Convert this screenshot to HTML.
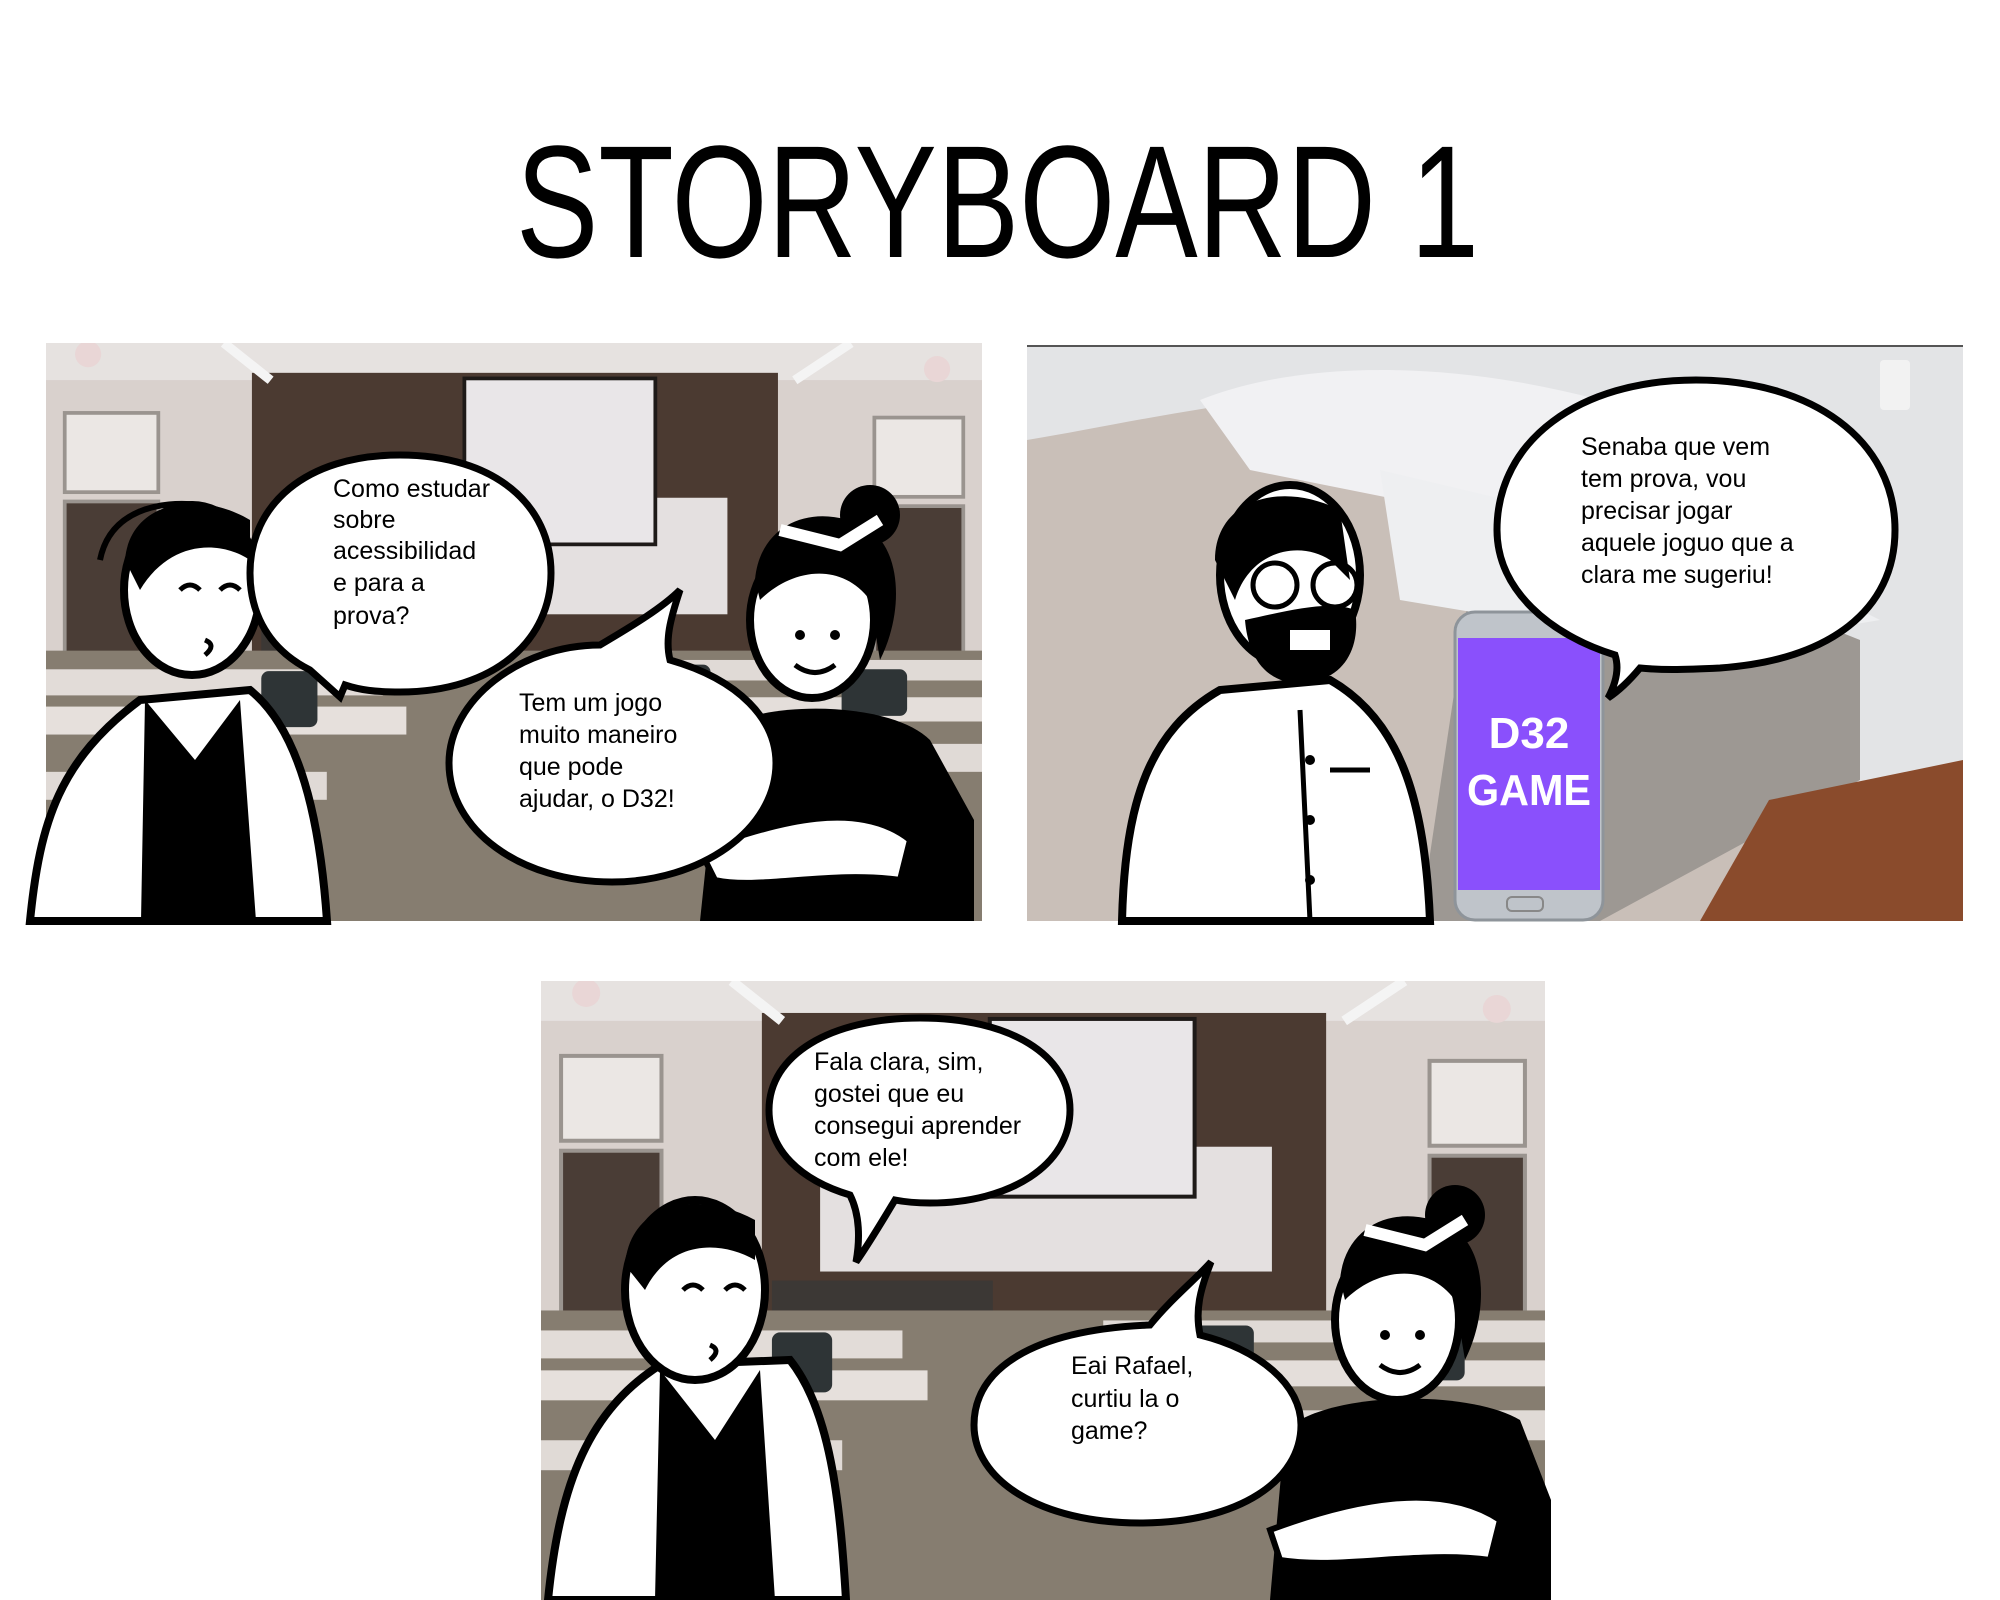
<!DOCTYPE html>
<html><head><meta charset="utf-8"><style>
html,body{margin:0;padding:0;background:#fff;width:2000px;height:1600px;overflow:hidden}
svg{display:block}
.t{font-family:"Liberation Sans","DejaVu Sans",sans-serif;font-size:25px;fill:#000}
</style></head><body>
<svg width="2000" height="1600" viewBox="0 0 2000 1600" xmlns="http://www.w3.org/2000/svg">
<defs>
<symbol id="room" viewBox="0 0 1000 620" preserveAspectRatio="none">
<rect width="1000" height="620" fill="#cfc6c2"/>
<rect width="1000" height="40" fill="#e6e2e0"/>
<rect x="0" y="40" width="220" height="380" fill="#d9d1cd"/>
<rect x="782" y="40" width="218" height="380" fill="#d9d1cd"/>
<rect x="20" y="75" width="100" height="85" fill="#ebe7e4" stroke="#9a948f" stroke-width="4"/>
<rect x="20" y="170" width="100" height="230" fill="#4a3d36" stroke="#9a948f" stroke-width="4"/>
<rect x="885" y="80" width="95" height="85" fill="#ebe7e4" stroke="#9a948f" stroke-width="4"/>
<rect x="885" y="175" width="95" height="225" fill="#4a3d36" stroke="#9a948f" stroke-width="4"/>
<rect x="220" y="32" width="562" height="300" fill="#4b3a31"/>
<rect x="278" y="166" width="450" height="125" fill="#e4e0e0"/>
<rect x="447" y="38" width="204" height="178" fill="#e9e6e8" stroke="#1e1a18" stroke-width="4"/>
<rect x="230" y="300" width="220" height="80" fill="#3c3835"/>
<rect x="0" y="330" width="1000" height="290" fill="#867d70"/>
<rect x="0" y="350" width="360" height="28" fill="#e2dcd8"/>
<rect x="0" y="390" width="385" height="30" fill="#e6e0dc"/>
<rect x="0" y="460" width="300" height="30" fill="#e0dad6"/>
<rect x="560" y="340" width="440" height="22" fill="#e0dad6"/>
<rect x="620" y="380" width="380" height="26" fill="#e4deda"/>
<rect x="700" y="430" width="300" height="30" fill="#e0dad6"/>
<rect x="230" y="352" width="60" height="60" rx="8" fill="#2e3436"/>
<rect x="650" y="345" width="60" height="45" rx="8" fill="#2e3436"/>
<rect x="850" y="350" width="70" height="50" rx="8" fill="#2e3436"/>
<circle cx="45" cy="12" r="14" fill="#e9d6d6"/>
<circle cx="952" cy="28" r="14" fill="#e9d6d6"/>
<path d="M190 0 L240 40 M800 40 L860 0" stroke="#f4f4f4" stroke-width="10"/>
</symbol>
</defs>

<text x="516" y="257" font-family="Liberation Sans, sans-serif" font-size="160" textLength="963" lengthAdjust="spacingAndGlyphs" fill="#000">STORYBOARD 1</text>

<!-- Panel 1 -->
<use href="#room" x="46" y="343" width="936" height="578"/>
<!-- man 1 -->
<path d="M30 921 C40 820 60 760 140 700 L250 690 C300 730 320 820 327 921 Z" fill="#fff" stroke="#000" stroke-width="8"/>
<path d="M145 700 L195 760 L240 700 L256 921 L141 921 Z" fill="#000"/>
<ellipse cx="192" cy="590" rx="68" ry="85" fill="#fff" stroke="#000" stroke-width="8"/>
<path d="M125 560 C130 500 200 490 250 520 L250 560 C220 540 170 540 140 590 Z" fill="#000"/>
<path d="M100 560 C110 510 160 500 200 505" stroke="#000" stroke-width="6" fill="none"/>
<path d="M180 590 q10 -10 20 0 M220 590 q10 -10 20 0 M205 640 q12 5 0 15" stroke="#000" stroke-width="5" fill="none"/>
<!-- woman 1 -->
<path d="M700 921 L720 730 C760 700 890 700 930 740 L974 820 L974 921 Z" fill="#000"/>
<path d="M700 850 C780 820 860 800 910 840 L900 880 C830 870 760 890 715 880 Z" fill="#fff" stroke="#000" stroke-width="6"/>
<ellipse cx="812" cy="620" rx="62" ry="78" fill="#fff" stroke="#000" stroke-width="8"/>
<path d="M755 580 C760 520 820 500 870 530 C900 550 905 610 880 660 L870 600 C840 560 790 570 760 600 Z" fill="#000"/>
<circle cx="870" cy="515" r="30" fill="#000"/>
<path d="M780 530 L840 545 L880 520" stroke="#fff" stroke-width="12" fill="none"/>
<circle cx="800" cy="635" r="5"/><circle cx="835" cy="635" r="5"/>
<path d="M795 665 q20 15 40 0" stroke="#000" stroke-width="5" fill="none"/>
<!-- bubbles panel1 -->
<path d="M250 573 C250 505 305 455 400 455 C495 455 551 505 551 573 C551 640 495 692 400 692 C375 692 360 690 345 685 L340 697 L310 670 C270 650 250 615 250 573 Z" fill="#fff" stroke="#000" stroke-width="7"/>
<text class="t"><tspan x="333" y="497">Como estudar</tspan><tspan x="333" y="528">sobre</tspan><tspan x="333" y="559">acessibilidad</tspan><tspan x="333" y="591">e para a</tspan><tspan x="333" y="624">prova?</tspan></text>
<path d="M449 763 C449 700 520 645 600 645 C625 630 660 610 680 590 C670 620 665 640 670 660 C740 680 776 720 776 763 C776 830 700 882 612 882 C520 882 449 830 449 763 Z" fill="#fff" stroke="#000" stroke-width="7"/>
<text class="t"><tspan x="519" y="711">Tem um jogo</tspan><tspan x="519" y="743">muito maneiro</tspan><tspan x="519" y="775">que pode</tspan><tspan x="519" y="807">ajudar, o D32!</tspan></text>

<!-- Panel 2 -->
<rect x="1027" y="345" width="936" height="576" fill="#e3e4e6"/>
<rect x="1027" y="345" width="936" height="2" fill="#555"/>
<path d="M1027 440 C1150 420 1300 380 1450 400 L1600 500 L1700 600 L1760 921 L1027 921 Z" fill="#c9bfb8"/>
<path d="M1200 400 C1300 360 1450 360 1600 400 L1640 480 L1500 520 L1250 470 Z" fill="#f1f1f3"/>
<path d="M1480 520 L1760 600 L1860 640 L1860 780 L1600 921 L1420 921 Z" fill="#9d9893"/>
<path d="M1380 470 L1760 560 L1880 620 L1700 650 L1400 600 Z" fill="#eeeff1"/>
<path d="M1769 800 L1963 760 L1963 921 L1700 921 Z" fill="#8a4b2c"/>
<rect x="1880" y="360" width="30" height="50" rx="4" fill="#f2f2f2"/>
<!-- beard man -->
<path d="M1122 921 C1125 800 1150 730 1220 690 L1330 680 C1400 720 1425 800 1430 921 Z" fill="#fff" stroke="#000" stroke-width="8"/>
<ellipse cx="1290" cy="575" rx="70" ry="90" fill="#fff" stroke="#000" stroke-width="8"/>
<path d="M1215 560 C1215 500 1280 480 1340 510 L1350 580 L1330 560 C1300 540 1250 550 1235 600 Z" fill="#000"/>
<path d="M1245 620 C1250 680 1290 690 1320 680 C1350 670 1360 640 1355 610 C1330 600 1290 610 1245 620 Z" fill="#000"/>
<rect x="1290" y="630" width="40" height="20" fill="#fff"/>
<circle cx="1275" cy="585" r="22" fill="none" stroke="#000" stroke-width="5"/>
<circle cx="1335" cy="585" r="22" fill="none" stroke="#000" stroke-width="5"/>
<path d="M1300 710 L1310 921 M1330 770 L1370 770" stroke="#000" stroke-width="5"/>
<circle cx="1310" cy="760" r="5"/><circle cx="1310" cy="820" r="5"/><circle cx="1310" cy="880" r="5"/>
<!-- phone -->
<rect x="1455" y="612" width="148" height="308" rx="20" fill="#bfc4ca" stroke="#8e949a" stroke-width="3"/>
<rect x="1458" y="638" width="142" height="252" fill="#8a50fc"/>
<rect x="1507" y="897" width="36" height="14" rx="5" fill="none" stroke="#888" stroke-width="2"/>
<text x="1529" y="748" text-anchor="middle" font-family="Liberation Sans, sans-serif" font-weight="bold" font-size="44" fill="#fff">D32</text>
<text x="1529" y="805" text-anchor="middle" font-family="Liberation Sans, sans-serif" font-weight="bold" font-size="44" fill="#fff" textLength="124" lengthAdjust="spacingAndGlyphs">GAME</text>
<!-- bubble 2 -->
<path d="M1497 530 C1497 440 1580 380 1696 380 C1812 380 1895 440 1895 530 C1895 610 1830 660 1720 668 C1680 670 1660 670 1640 668 C1630 680 1620 690 1608 698 C1615 685 1620 670 1615 655 C1550 635 1497 590 1497 530 Z" fill="#fff" stroke="#000" stroke-width="7"/>
<text class="t"><tspan x="1581" y="455">Senaba que vem</tspan><tspan x="1581" y="487">tem prova, vou</tspan><tspan x="1581" y="519">precisar jogar</tspan><tspan x="1581" y="551">aquele joguo que a</tspan><tspan x="1581" y="583">clara me sugeriu!</tspan></text>

<!-- Panel 3 -->
<use href="#room" x="541" y="981" width="1004" height="619"/>
<path d="M548 1600 C560 1480 590 1410 660 1365 L790 1360 C830 1410 840 1500 846 1600 Z" fill="#fff" stroke="#000" stroke-width="8"/>
<path d="M660 1370 L715 1440 L760 1370 L775 1600 L655 1600 Z" fill="#000"/>
<ellipse cx="695" cy="1290" rx="70" ry="90" fill="#fff" stroke="#000" stroke-width="8"/>
<path d="M625 1265 C630 1200 700 1190 755 1220 L755 1260 C720 1240 670 1240 645 1290 Z" fill="#000"/>
<path d="M683 1290 q10 -10 20 0 M725 1290 q10 -10 20 0 M710 1345 q12 5 0 15" stroke="#000" stroke-width="5" fill="none"/>
<path d="M1270 1600 L1285 1430 C1330 1390 1470 1390 1520 1420 L1551 1500 L1551 1600 Z" fill="#000"/>
<path d="M1270 1530 C1350 1500 1440 1480 1500 1520 L1490 1560 C1420 1550 1340 1570 1280 1560 Z" fill="#fff" stroke="#000" stroke-width="6"/>
<ellipse cx="1397" cy="1320" rx="62" ry="80" fill="#fff" stroke="#000" stroke-width="8"/>
<path d="M1340 1280 C1345 1220 1405 1200 1455 1230 C1485 1250 1490 1310 1465 1360 L1455 1300 C1425 1260 1375 1270 1345 1300 Z" fill="#000"/>
<circle cx="1455" cy="1215" r="30" fill="#000"/>
<path d="M1365 1230 L1425 1245 L1465 1220" stroke="#fff" stroke-width="12" fill="none"/>
<circle cx="1385" cy="1335" r="5"/><circle cx="1420" cy="1335" r="5"/>
<path d="M1380 1365 q20 15 40 0" stroke="#000" stroke-width="5" fill="none"/>
<path d="M769 1110 C769 1055 830 1018 920 1018 C1010 1018 1070 1055 1070 1110 C1070 1165 1010 1203 930 1203 C915 1203 905 1202 895 1200 C880 1225 868 1245 856 1262 C860 1240 860 1215 850 1195 C800 1180 769 1150 769 1110 Z" fill="#fff" stroke="#000" stroke-width="7"/>
<text class="t"><tspan x="814" y="1070">Fala clara, sim,</tspan><tspan x="814" y="1102">gostei que eu</tspan><tspan x="814" y="1134">consegui aprender</tspan><tspan x="814" y="1166">com ele!</tspan></text>
<path d="M974 1425 C974 1370 1030 1330 1150 1325 C1170 1300 1195 1280 1211 1262 C1200 1290 1195 1310 1200 1335 C1260 1350 1301 1385 1301 1425 C1301 1480 1240 1523 1140 1523 C1040 1523 974 1480 974 1425 Z" fill="#fff" stroke="#000" stroke-width="7"/>
<text class="t"><tspan x="1071" y="1374">Eai Rafael,</tspan><tspan x="1071" y="1407">curtiu la o</tspan><tspan x="1071" y="1439">game?</tspan></text>
</svg>
</body></html>
